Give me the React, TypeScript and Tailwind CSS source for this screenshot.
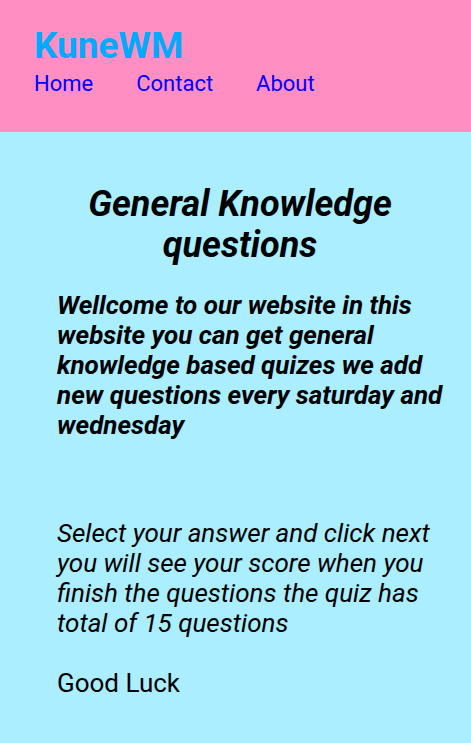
export default function App() {
  return (
    <div className="min-h-[743px] bg-[#aaeeff] font-['Roboto',sans-serif] text-black">
      <header className="h-[132px] bg-[#ff8fc3] pl-[34px] pt-[25px]">
        <div className="text-[37px] font-bold leading-[42px] text-[#00aaff]">KuneWM</div>
        <nav className="mt-[4px] flex gap-[43px] text-[22px] leading-[26px] text-[#0000ff]">
          <a>Home</a>
          <a>Contact</a>
          <a>About</a>
        </nav>
      </header>
      <main className="pl-[57px] pr-[20px] pt-[52px]">
        <h1 className="pr-[28px] text-center text-[36px] font-bold italic leading-[41px]">
          General Knowledge questions
        </h1>
        <p className="mt-[24px] text-[26px] font-bold italic leading-[30px]">
          Wellcome to our website in this website you can get general knowledge based quizes we add new questions every saturday and wednesday
        </p>
        <p className="mt-[78px] text-[26px] italic leading-[30px]">
          Select your answer and click next you will see your score when you finish the questions the quiz has total of 15 questions
        </p>
        <p className="mt-[30px] text-[26px] leading-[30px]">Good Luck</p>
      </main>
    </div>
  );
}
